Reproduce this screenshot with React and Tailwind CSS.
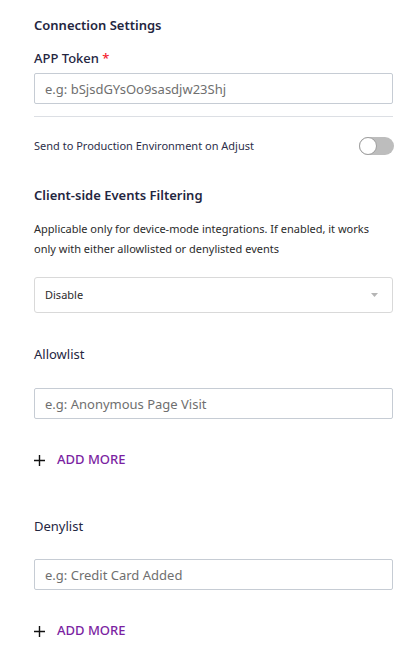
const font = { fontFamily: '"Noto Sans", "Open Sans", sans-serif' }

function TextInput({ placeholder }) {
  return (
    <input
      placeholder={placeholder}
      className="block w-full h-[31px] rounded-[2px] border border-[#c6ccd4] bg-white px-[10px] text-[13px] text-[#333] placeholder:text-[#6f6f6f] outline-none"
    />
  )
}

function AddMore() {
  return (
    <button className="flex items-center gap-[12px] h-[18px] text-[13px] font-medium text-[#7b1fa2]">
      <svg width="11" height="11" viewBox="0 0 11 11" fill="none" stroke="#111" strokeWidth="1.4">
        <path d="M5.5 0v11M0 5.5h11" />
      </svg>
      ADD MORE
    </button>
  )
}

export default function App() {
  return (
    <div style={font} className="bg-white w-[414px] min-h-[646px] pl-[34px] pr-[21px] pt-[16px] pb-[20px]">
      <h2 className="text-[13px] leading-[18px] font-semibold text-[#24263f]">Connection Settings</h2>

      <label className="block mt-[15px] text-[13px] leading-[18px] font-medium text-[#24263f]">
        APP Token <span className="text-[#f5222d]">*</span>
      </label>
      <div className="mt-[6px]">
        <TextInput placeholder="e.g: bSjsdGYsOo9sasdjw23Shj" />
      </div>

      <div className="mt-[12px] border-t border-[#dcdfe4]" />

      <div className="mt-[20px] flex items-center justify-between h-[18px]">
        <span className="text-[11px] text-[#2d2f4a]">Send to Production Environment on Adjust</span>
        <div className="relative w-[35px] h-[18px] rounded-full bg-[#bdbdbd] mr-[-1px]">
          <div className="absolute left-0 top-0 w-[18px] h-[18px] rounded-full bg-white border border-[#9e9e9e]" />
        </div>
      </div>

      <h3 className="mt-[31px] text-[13px] leading-[18px] font-semibold text-[#24263f]">Client-side Events Filtering</h3>
      <p className="mt-[15px] text-[11px] leading-[20px] text-[#2b2b2b]">
        Applicable only for device-mode integrations. If enabled, it works only with either allowlisted or denylisted events
      </p>

      <div className="mt-[18px] flex items-center justify-between h-[36px] rounded-[3px] border border-[#d9d9d9] pl-[10px] pr-[14px]">
        <span className="text-[11px] text-[#2b2b2b]">Disable</span>
        <svg width="7" height="4" viewBox="0 0 7 4">
          <path d="M0 0h7L3.5 4z" fill="#b5b5b5" />
        </svg>
      </div>

      <h4 className="mt-[32px] text-[13px] leading-[18px] font-normal text-[#24263f]">Allowlist</h4>
      <div className="mt-[25px]">
        <TextInput placeholder="e.g: Anonymous Page Visit" />
      </div>
      <div className="mt-[32px]">
        <AddMore />
      </div>

      <h4 className="mt-[48px] text-[13px] leading-[18px] font-normal text-[#24263f]">Denylist</h4>
      <div className="mt-[24px]">
        <TextInput placeholder="e.g: Credit Card Added" />
      </div>
      <div className="mt-[32px]">
        <AddMore />
      </div>
    </div>
  )
}
